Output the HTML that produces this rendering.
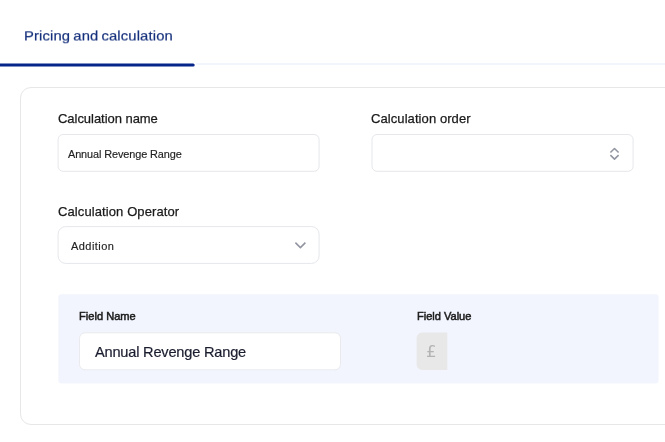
<!DOCTYPE html>
<html><head><meta charset="utf-8">
<style>
html,body{margin:0;padding:0;background:#fff;}
body{width:665px;height:442px;overflow:hidden;position:relative;font-family:"Liberation Sans",sans-serif;color:#1f1f1f;}
.abs{position:absolute;white-space:nowrap;}
.t{will-change:transform;}
.tab{left:24.2px;top:26.2px;font-size:14.8px;letter-spacing:0.14px;word-spacing:-1.2px;color:#15307c;line-height:18px;-webkit-text-stroke:0.2px #15307c;transform:translateY(0.5px) scaleY(0.92);transform-origin:0 14px;}
.label{font-size:13px;line-height:16px;color:#1a1a1a;-webkit-text-stroke:0.25px #1a1a1a;}
.small{font-size:11px;line-height:14px;color:#222;-webkit-text-stroke:0.15px #222;}
.flabel{font-size:11.1px;line-height:14px;color:#1c1c1c;-webkit-text-stroke:0.5px #1c1c1c;}
</style></head><body>
<svg class="abs" style="left:0;top:0;" width="665" height="442" viewBox="0 0 665 442">
<!-- tab underline -->
<rect x="196" y="63" width="480" height="2" fill="#f2f5fe"/>
<rect x="-4" y="63.4" width="198.7" height="3" rx="1.5" fill="#06258a"/>
<!-- card -->
<rect x="20.5" y="87.5" width="700" height="337" rx="10.5" fill="#fff" stroke="#e7e7e7"/>
<!-- inputs -->
<rect x="58.1" y="134.5" width="261" height="36.8" rx="5" fill="#fff" stroke="#e5e7eb"/>
<rect x="372" y="134.5" width="261.1" height="36.8" rx="5" fill="#fff" stroke="#e5e7eb"/>
<rect x="58.1" y="226.6" width="261" height="36.8" rx="7.5" fill="#fff" stroke="#e5e7eb"/>
<!-- stepper icon -->
<path d="M610.4 152.5 L614.5 148.5 L618.6 152.5 M610.4 155.1 L614.5 159.1 L618.6 155.1" fill="none" stroke="#9296a2" stroke-width="1.55" stroke-linejoin="round"/>
<!-- select chevron -->
<path d="M295.4 242.6 L300.4 247.6 L305.4 242.6" fill="none" stroke="#9194a0" stroke-width="1.5" stroke-linejoin="round"/>
<!-- panel -->
<rect x="58.3" y="294.2" width="600.3" height="89.4" rx="3" fill="#f2f5fe"/>
<rect x="79.5" y="332.8" width="261" height="37" rx="5.5" fill="#fff" stroke="#e9eaed"/>
<path d="M447.3 332.6 H422.1 A5.5 5.5 0 0 0 416.6 338.1 V364.4 A5.5 5.5 0 0 0 422.1 369.9 H447.3 Z" fill="#e8e8e8"/>
</svg>

<div class="abs t tab">Pricing and calculation</div>

<div class="abs t label" style="left:57.7px;top:111px;letter-spacing:-0.04px;">Calculation name</div>
<div class="abs t small" style="left:68.3px;top:147px;font-size:10.9px;letter-spacing:-0.1px;">Annual Revenge Range</div>

<div class="abs t label" style="left:371.4px;top:111px;letter-spacing:0.08px;">Calculation order</div>

<div class="abs t label" style="left:57.9px;top:204px;letter-spacing:0.1px;">Calculation Operator</div>
<div class="abs t small" style="left:71.3px;top:239px;letter-spacing:0.44px;">Addition</div>

<div class="abs t flabel" style="left:79.4px;top:309px;">Field Name</div>
<div class="abs t" style="left:94.8px;top:342px;font-size:14.6px;letter-spacing:-0.2px;line-height:20px;color:#1a1d2e;-webkit-text-stroke:0.2px #1a1d2e;">Annual Revenge Range</div>
<div class="abs t flabel" style="left:416.8px;top:309px;letter-spacing:-0.03px;">Field Value</div>
<div class="abs t" style="left:426.2px;top:343px;font-family:'DejaVu Sans',sans-serif;font-size:16.6px;line-height:18px;color:#b3b3b3;">£</div>
</body></html>
